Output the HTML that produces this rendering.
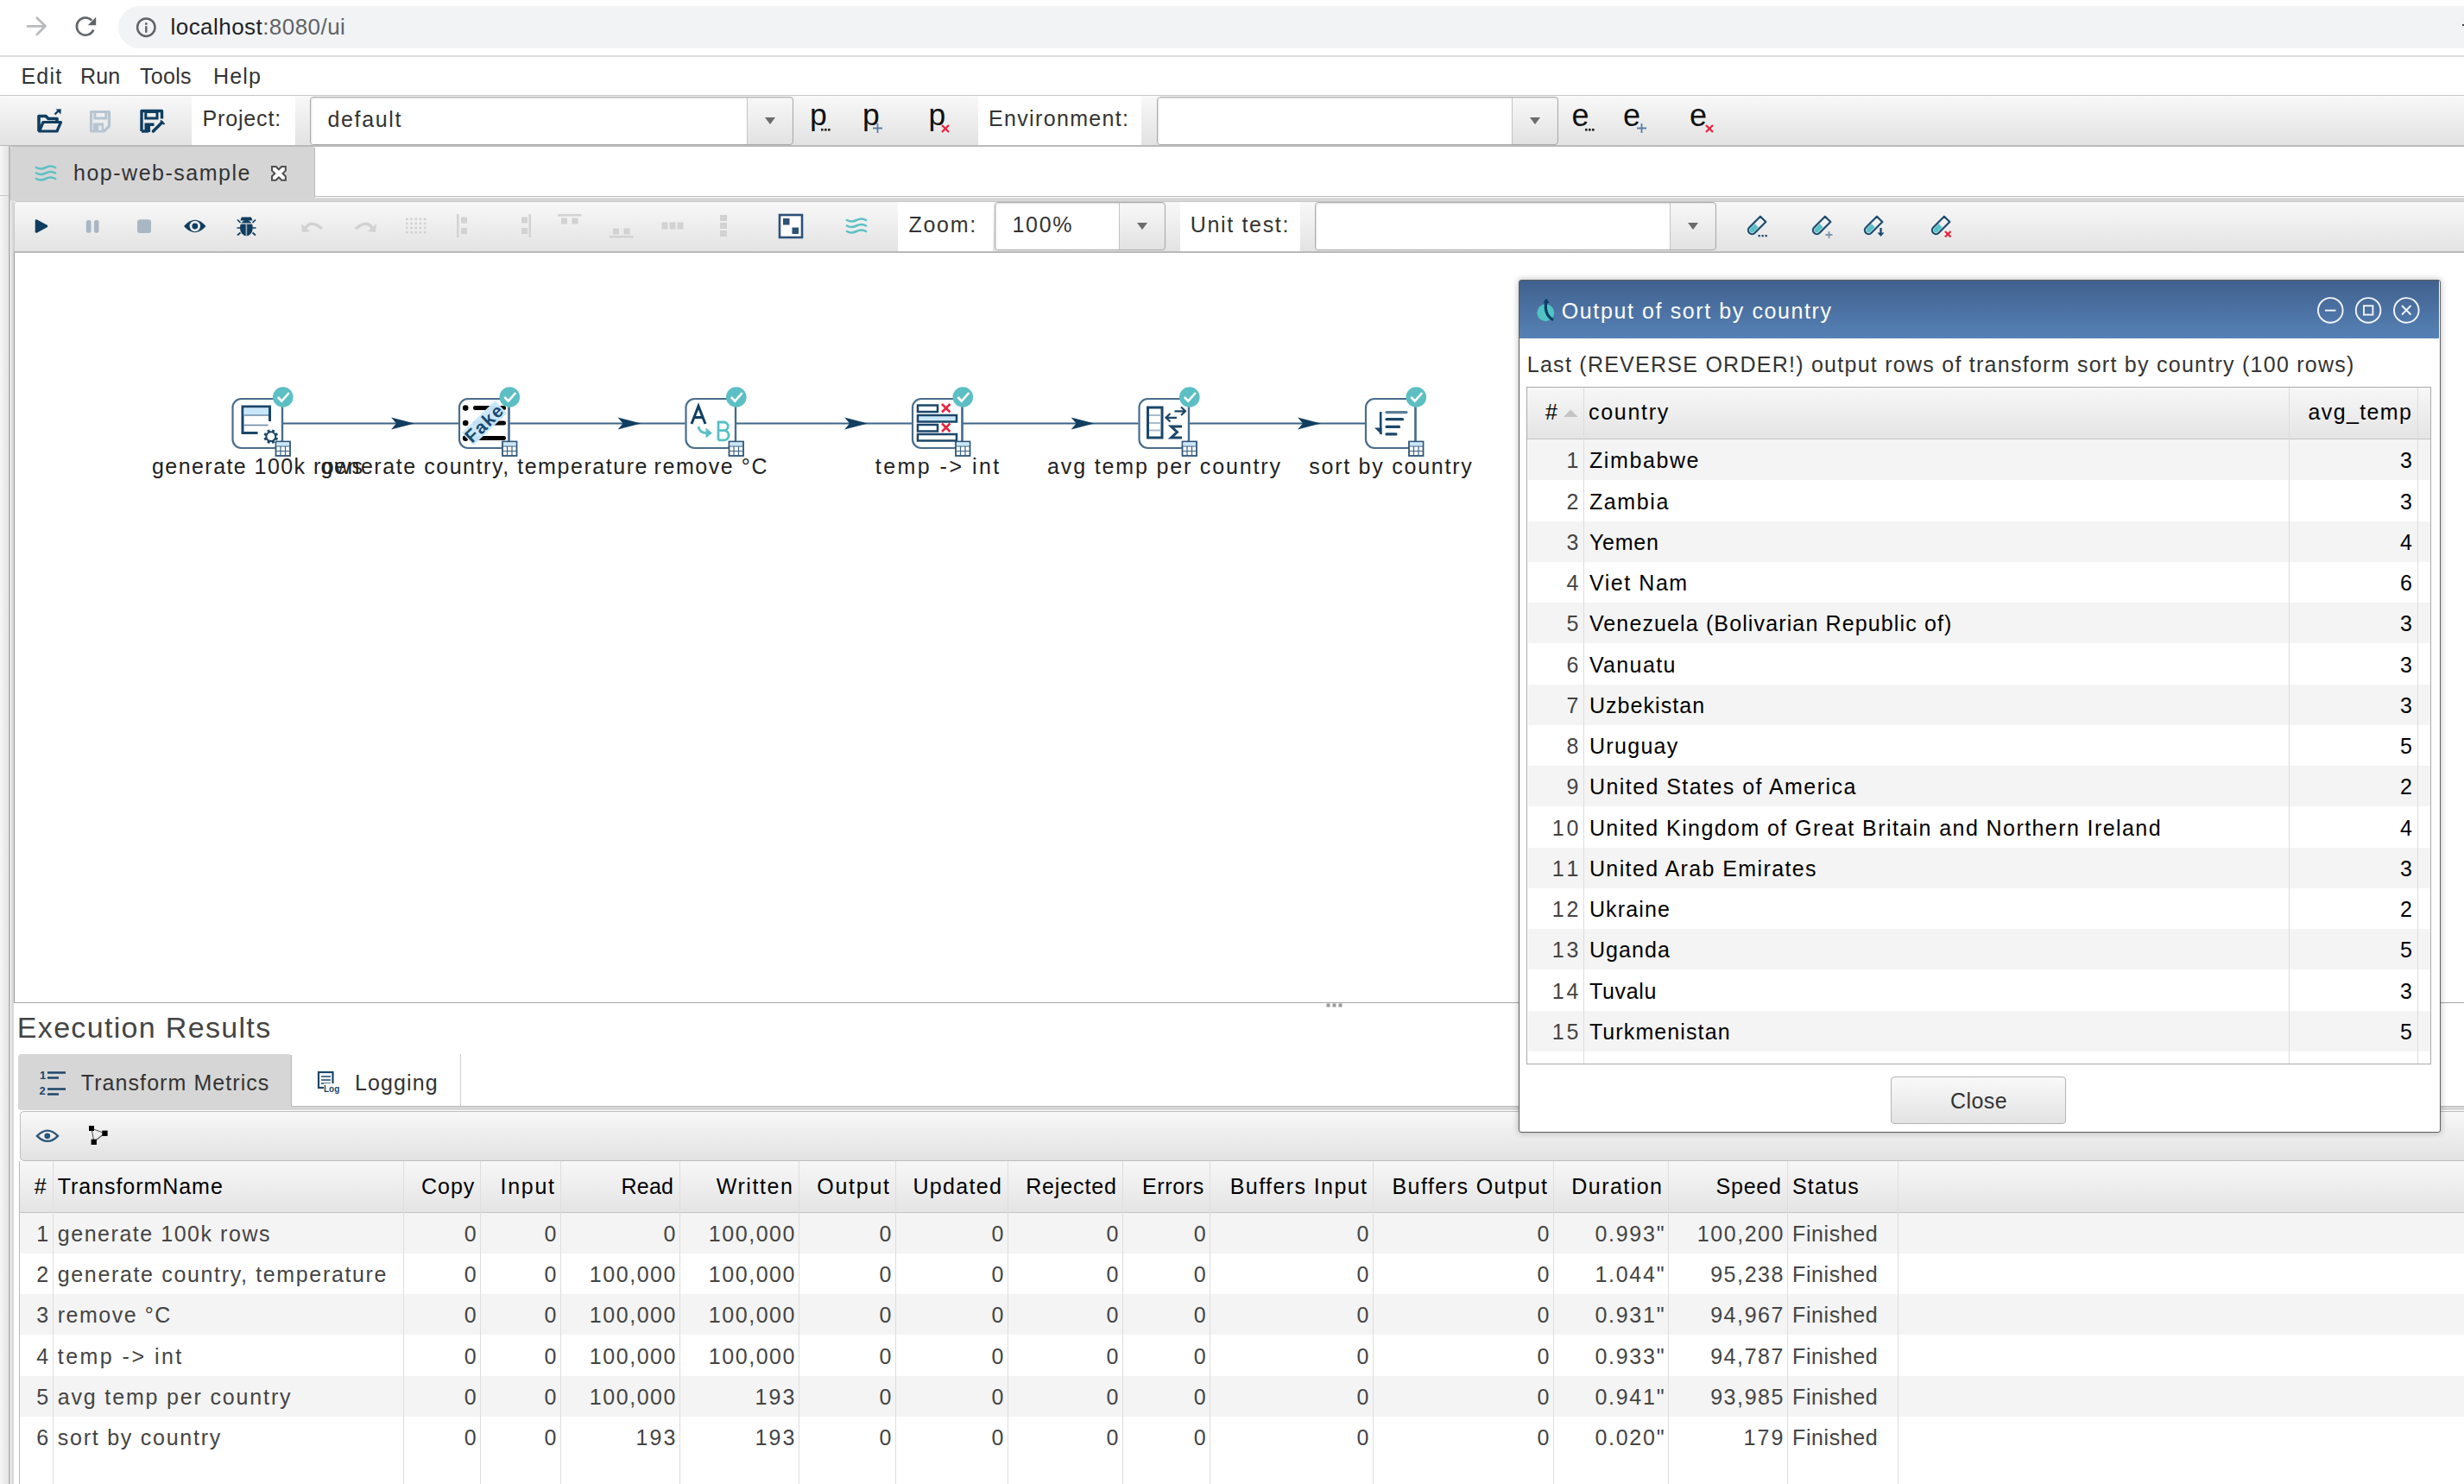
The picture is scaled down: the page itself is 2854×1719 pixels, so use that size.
<!DOCTYPE html><html><head><meta charset="utf-8"><style>
*{margin:0;padding:0;box-sizing:border-box}
html,body{width:2854px;height:1719px;overflow:hidden;background:#fff;font-family:"Liberation Sans",sans-serif}
.a{position:absolute}
.t{position:absolute;white-space:nowrap}
svg{position:absolute;overflow:visible}
</style></head><body><div class="a" style="left:0px;top:0px;width:2854px;height:65px;background:#fff"></div>
<div class="a" style="left:137px;top:7px;width:2760px;height:49px;background:#f1f3f4;border-radius:25px"></div>
<div class="a" style="left:0px;top:64px;width:2854px;height:2px;background:#dadce0"></div>
<div class="a" style="left:2851.5px;top:27.5px;width:3px;height:2.2px;background:#444"></div>
<svg style="left:0;top:0" width="190" height="64"><path d="M32 30.3 H52.5 M42.8 20.8 L52.5 30.3 L42.8 40" stroke="#b9babc" stroke-width="2.7" fill="none" stroke-linecap="round" stroke-linejoin="round"/><path d="M106.3 23.6 A10.1 10.1 0 1 0 108.3 34.4" stroke="#5f6368" stroke-width="2.6" fill="none"/><path d="M111.2 19.8 V29.3 H101.8 Z" fill="#5f6368"/><circle cx="169.3" cy="31.7" r="10.2" stroke="#5f6368" stroke-width="2.5" fill="none"/><rect x="168.1" y="30.2" width="2.4" height="7.6" fill="#5f6368"/><rect x="168.1" y="26.2" width="2.4" height="2.6" fill="#5f6368"/></svg>
<div class="t" style="top:15.99px;font-size:26px;letter-spacing:0.450px;line-height:30px;color:#202124;left:197.50px;">localhost<span style="color:#5f6368">:8080/ui</span></div>
<div class="t" style="top:73.84px;font-size:25px;letter-spacing:1.209px;line-height:29px;color:#333;left:24.40px;">Edit</div>
<div class="t" style="top:73.84px;font-size:25px;letter-spacing:0.196px;line-height:29px;color:#333;left:93.00px;">Run</div>
<div class="t" style="top:73.84px;font-size:25px;letter-spacing:0.276px;line-height:29px;color:#333;left:162.00px;">Tools</div>
<div class="t" style="top:73.84px;font-size:25px;letter-spacing:1.182px;line-height:29px;color:#333;left:247.00px;">Help</div>
<div class="a" style="left:0px;top:110px;width:2854px;height:1px;background:#c6c6c6"></div>
<div class="a" style="left:0px;top:111px;width:2854px;height:58px;background:linear-gradient(#f8f8f8,#e2e2e2)"></div>
<div class="a" style="left:0px;top:168px;width:2854px;height:1.5px;background:#b9b9b9"></div>
<svg style="left:0;top:110" width="200" height="60"><path d="M45 42 V24.5 H53 L56 27.5 H66 V30.5" fill="none" stroke="#0f3d5f" stroke-width="3.6" stroke-linejoin="round"/><path d="M45.5 42 L50 31.5 H70.5 L66 42 Z" fill="none" stroke="#0f3d5f" stroke-width="3.2" stroke-linejoin="round"/><path d="M63.5 22.5 L68 18" stroke="#0f3d5f" stroke-width="2.4"/><path d="M70.8 16.2 L64.6 16.6 L70.4 22.4 Z" fill="#0f3d5f"/><path d="M105.5 19.5 H126.5 V36 L120.5 42 H105.5 Z" fill="none" stroke="#b7c5d1" stroke-width="3.2" stroke-linejoin="round"/><rect x="109.8" y="19.5" width="13" height="7.5" fill="none" stroke="#b7c5d1" stroke-width="3"/><path d="M108 32.5 H120 V41 H108 Z" fill="#b7c5d1"/><rect x="114.3" y="35.5" width="3.3" height="5.5" fill="#e9e9e9"/><path d="M164 42 V18.5 H187.5 V27.5" fill="none" stroke="#0f3d5f" stroke-width="3.4" stroke-linejoin="round"/><path d="M164 42 H172" stroke="#0f3d5f" stroke-width="3.4"/><rect x="168.8" y="19.5" width="13.2" height="7.5" fill="none" stroke="#0f3d5f" stroke-width="3"/><path d="M167.5 32.5 H178.5 V36 H174 V43 H167.5 Z" fill="#0f3d5f"/><path d="M177.5 42 L187.5 32" stroke="#0f3d5f" stroke-width="3.6" stroke-linecap="round"/><path d="M186 29.5 L190.5 34" stroke="#0f3d5f" stroke-width="2"/></svg>
<div class="a" style="left:222px;top:111px;width:120px;height:57px;background:#fff"></div>
<div class="t" style="top:123.14px;font-size:25px;letter-spacing:0.836px;line-height:29px;color:#333;left:234.50px;">Project:</div>
<div class="a" style="left:359px;top:112px;width:560px;height:56px;background:linear-gradient(#f8f8f8,#e2e2e2);border:1px solid #a9a9a9;border-radius:4px;box-shadow:inset 0 1px 2px rgba(0,0,0,.08)"></div>
<div class="a" style="left:360px;top:113px;width:505px;height:54px;background:#fff;border-radius:3px 0 0 3px;box-shadow:inset 1px 1px 2px rgba(0,0,0,.12)"></div>
<div class="a" style="left:865px;top:113px;width:1px;height:54px;background:#c4c4c4"></div>
<svg style="left:886.0px;top:136.0px" width="12" height="9"><path d="M0 0 H12 L6 8 Z" fill="#6b6b6b"/></svg>
<div class="t" style="top:124.34px;font-size:25px;letter-spacing:1.632px;line-height:29px;color:#333;left:379.50px;">default</div>
<div class="t" style="top:113.00px;font-size:35.5px;letter-spacing:0.000px;line-height:41px;color:#111;left:938.00px;">p</div>
<div class="t" style="top:113.00px;font-size:35.5px;letter-spacing:0.000px;line-height:41px;color:#111;left:999.00px;">p</div>
<div class="t" style="top:113.00px;font-size:35.5px;letter-spacing:0.000px;line-height:41px;color:#111;left:1075.50px;">p</div>
<div class="a" style="left:1133px;top:111px;width:189px;height:57px;background:#fff"></div>
<div class="t" style="top:123.14px;font-size:25px;letter-spacing:1.342px;line-height:29px;color:#333;left:1145.00px;">Environment:</div>
<div class="a" style="left:1339.5px;top:112px;width:465.0px;height:56px;background:linear-gradient(#f8f8f8,#e2e2e2);border:1px solid #a9a9a9;border-radius:4px;box-shadow:inset 0 1px 2px rgba(0,0,0,.08)"></div>
<div class="a" style="left:1340.5px;top:113px;width:410.5px;height:54px;background:#fff;border-radius:3px 0 0 3px;box-shadow:inset 1px 1px 2px rgba(0,0,0,.12)"></div>
<div class="a" style="left:1751px;top:113px;width:1px;height:54px;background:#c4c4c4"></div>
<svg style="left:1771.75px;top:136.0px" width="12" height="9"><path d="M0 0 H12 L6 8 Z" fill="#6b6b6b"/></svg>
<div class="t" style="top:113.33px;font-size:36px;letter-spacing:0.000px;line-height:41px;color:#111;left:1820.50px;">e</div>
<div class="t" style="top:113.33px;font-size:36px;letter-spacing:0.000px;line-height:41px;color:#111;left:1880.00px;">e</div>
<div class="t" style="top:113.33px;font-size:36px;letter-spacing:0.000px;line-height:41px;color:#111;left:1957.00px;">e</div>
<svg style="left:951px;top:148.5px" width="12" height="4"><rect x="0" y="0" width="2.6" height="2.6" fill="#222"/><rect x="4" y="0" width="2.6" height="2.6" fill="#222"/><rect x="8" y="0" width="2.6" height="2.6" fill="#222"/></svg>
<svg style="left:1011px;top:142.5px" width="12" height="12"><path d="M0 5.5 H11 M5.5 0 V11" stroke="#5a7fa3" stroke-width="1.8"/></svg>
<svg style="left:1089.5px;top:143.5px" width="12" height="12"><path d="M1 1 L9 9 M9 1 L1 9" stroke="#e8253f" stroke-width="2.4"/></svg>
<svg style="left:1836px;top:148.5px" width="12" height="4"><rect x="0" y="0" width="2.6" height="2.6" fill="#222"/><rect x="4" y="0" width="2.6" height="2.6" fill="#222"/><rect x="8" y="0" width="2.6" height="2.6" fill="#222"/></svg>
<svg style="left:1896px;top:142.5px" width="12" height="12"><path d="M0 5.5 H11 M5.5 0 V11" stroke="#5a7fa3" stroke-width="1.8"/></svg>
<svg style="left:1974.5px;top:143.5px" width="12" height="12"><path d="M1 1 L9 9 M9 1 L1 9" stroke="#e8253f" stroke-width="2.4"/></svg>
<div class="a" style="left:0px;top:169px;width:10px;height:1550px;background:linear-gradient(90deg,#f6f6f6,#e3e3e3)"></div>
<div class="a" style="left:0px;top:226px;width:10px;height:1px;background:#c8c8c8"></div>
<div class="a" style="left:10px;top:169px;width:2px;height:1550px;background:#b9b9b9"></div>
<div class="a" style="left:12px;top:170px;width:352.5px;height:62px;background:#d5d5d5;border-radius:3px 3px 0 0"></div>
<div class="a" style="left:13px;top:229px;width:2841px;height:3.5px;background:#d6d6d6"></div>
<div class="a" style="left:364px;top:226.8px;width:2490px;height:1px;background:#b9b9b9"></div>
<div class="a" style="left:363.8px;top:171px;width:1.2px;height:57px;background:#b9b9b9"></div>
<svg style="left:41px;top:190px" width="26" height="22"><g fill="none" stroke="#5cc1c5" stroke-width="2.6" stroke-linecap="round"><path d="M1 4 q5 3 11 0 t11 0"/><path d="M1 10.5 q5 3 11 0 t11 0"/><path d="M1 17 q5 3 11 0 t11 0"/></g></svg>
<div class="t" style="top:185.64px;font-size:25px;letter-spacing:1.513px;line-height:29px;color:#333;left:85.00px;">hop-web-sample</div>
<svg style="left:314px;top:192px" width="18" height="18"><polygon points="1.00,1.00 5.60,1.00 8.90,4.30 12.20,1.00 16.80,1.00 16.80,5.60 13.50,8.90 16.80,12.20 16.80,16.80 12.20,16.80 8.90,13.50 5.60,16.80 1.00,16.80 1.00,12.20 4.30,8.90 1.00,5.60" fill="#fff" stroke="#4d4d4d" stroke-width="2" stroke-linejoin="miter"/></svg>
<div class="a" style="left:16px;top:232.5px;width:2838px;height:60px;background:linear-gradient(#f8f8f8,#e2e2e2);border-top:1px solid #c9c9c9;border-left:1px solid #c9c9c9;border-radius:4px 0 0 0"></div>
<div class="a" style="left:16px;top:291px;width:2838px;height:1.5px;background:#b9b9b9"></div>
<svg style="left:0;top:232" width="1020" height="60"><path d="M42 23.5 L54 30 L42 36.5 Z" fill="#0f3d5f" stroke="#0f3d5f" stroke-width="2.6" stroke-linejoin="round"/><rect x="99.8" y="23" width="5.8" height="14.7" rx="2.2" fill="#a9b7c3"/><rect x="108.9" y="23" width="5.6" height="14.7" rx="2.2" fill="#a9b7c3"/><rect x="159" y="22.3" width="16" height="15.6" rx="3" fill="#a9b7c3"/><path d="M213 30 Q225.75 15.5 238.5 30 Q225.75 44.5 213 30 Z" fill="#0f3d5f"/><circle cx="225.8" cy="30" r="6.2" fill="#ececec"/><circle cx="225.8" cy="30" r="3.4" fill="#0f3d5f"/><path d="M279.8 19.5 H291 L292.5 23.5 H278.3 Z" fill="#0f3d5f"/><ellipse cx="285.4" cy="32" rx="7.4" ry="9.3" fill="#0f3d5f"/><path d="M278 27 h15" stroke="#e8e8e8" stroke-width="1.2"/><path d="M285.4 27 V41" stroke="#9fb0bf" stroke-width="1.6"/><path d="M275 22.5 l3.5 3.5 M296 22.5 l-3.5 3.5 M274.5 32 h4 M296.5 32 h-4 M275 40.5 l3.5 -3 M296 40.5 l-3.5 -3" stroke="#0f3d5f" stroke-width="1.7"/><path d="M352 36 Q358 20 373 33" fill="none" stroke="#d2d2d2" stroke-width="3.5"/><path d="M349 27 L350 37 L359 36 Z" fill="#d2d2d2"/><path d="M433 36 Q427 20 412 33" fill="none" stroke="#d2d2d2" stroke-width="3.5"/><path d="M436 27 L435 37 L426 36 Z" fill="#d2d2d2"/></svg>
<svg style="left:0;top:0" width="1" height="1"><rect x="470.0" y="252.5" width="2.6" height="2.6" fill="#d2d2d2"/><rect x="470.0" y="257.6" width="2.6" height="2.6" fill="#d2d2d2"/><rect x="470.0" y="262.7" width="2.6" height="2.6" fill="#d2d2d2"/><rect x="470.0" y="267.8" width="2.6" height="2.6" fill="#d2d2d2"/><rect x="475.2" y="252.5" width="2.6" height="2.6" fill="#d2d2d2"/><rect x="475.2" y="257.6" width="2.6" height="2.6" fill="#d2d2d2"/><rect x="475.2" y="262.7" width="2.6" height="2.6" fill="#d2d2d2"/><rect x="475.2" y="267.8" width="2.6" height="2.6" fill="#d2d2d2"/><rect x="480.4" y="252.5" width="2.6" height="2.6" fill="#d2d2d2"/><rect x="480.4" y="257.6" width="2.6" height="2.6" fill="#d2d2d2"/><rect x="480.4" y="262.7" width="2.6" height="2.6" fill="#d2d2d2"/><rect x="480.4" y="267.8" width="2.6" height="2.6" fill="#d2d2d2"/><rect x="485.6" y="252.5" width="2.6" height="2.6" fill="#d2d2d2"/><rect x="485.6" y="257.6" width="2.6" height="2.6" fill="#d2d2d2"/><rect x="485.6" y="262.7" width="2.6" height="2.6" fill="#d2d2d2"/><rect x="485.6" y="267.8" width="2.6" height="2.6" fill="#d2d2d2"/><rect x="490.8" y="252.5" width="2.6" height="2.6" fill="#d2d2d2"/><rect x="490.8" y="257.6" width="2.6" height="2.6" fill="#d2d2d2"/><rect x="490.8" y="262.7" width="2.6" height="2.6" fill="#d2d2d2"/><rect x="490.8" y="267.8" width="2.6" height="2.6" fill="#d2d2d2"/><rect x="529" y="248" width="2.5" height="27" fill="#d2d2d2"/><rect x="534" y="251.5" width="7" height="7" fill="#d2d2d2"/><rect x="534" y="264" width="7" height="7" fill="#d2d2d2"/><rect x="612.5" y="248" width="2.5" height="27" fill="#d2d2d2"/><rect x="604" y="251.5" width="7" height="7" fill="#d2d2d2"/><rect x="604" y="264" width="7" height="7" fill="#d2d2d2"/><rect x="646" y="248" width="27.5" height="2.5" fill="#d2d2d2"/><rect x="650" y="252.5" width="7" height="7" fill="#d2d2d2"/><rect x="662.5" y="252.5" width="7" height="7" fill="#d2d2d2"/><rect x="706" y="273" width="27.5" height="2.5" fill="#d2d2d2"/><rect x="710" y="264.5" width="7" height="7" fill="#d2d2d2"/><rect x="722.5" y="264.5" width="7" height="7" fill="#d2d2d2"/><rect x="766.5" y="257.5" width="7" height="8" fill="#d2d2d2"/><rect x="775.5" y="257.5" width="7" height="8" fill="#d2d2d2"/><rect x="784.5" y="257.5" width="7" height="8" fill="#d2d2d2"/><rect x="834" y="249" width="8" height="7" fill="#d2d2d2"/><rect x="834" y="258" width="8" height="7" fill="#d2d2d2"/><rect x="834" y="267" width="8" height="7" fill="#d2d2d2"/><rect x="903" y="249" width="26" height="26" fill="#fff" stroke="#2c5277" stroke-width="2.6"/><rect x="907" y="253" width="7.5" height="7.5" fill="#2c5277"/><rect x="917.5" y="263.5" width="7.5" height="7.5" fill="#2c5277"/></svg>
<svg style="left:980px;top:251px" width="26" height="22"><g fill="none" stroke="#5cc1c5" stroke-width="2.6" stroke-linecap="round"><path d="M1 4 q5 3 11 0 t11 0"/><path d="M1 10.5 q5 3 11 0 t11 0"/><path d="M1 17 q5 3 11 0 t11 0"/></g></svg>
<div class="a" style="left:1040px;top:234px;width:110px;height:57px;background:#fff"></div>
<div class="t" style="top:246.34px;font-size:25px;letter-spacing:1.696px;line-height:29px;color:#333;left:1052.50px;">Zoom:</div>
<div class="a" style="left:1152px;top:234px;width:198px;height:56px;background:linear-gradient(#f8f8f8,#e2e2e2);border:1px solid #a9a9a9;border-radius:4px;box-shadow:inset 0 1px 2px rgba(0,0,0,.08)"></div>
<div class="a" style="left:1153px;top:235px;width:143px;height:54px;background:#fff;border-radius:3px 0 0 3px;box-shadow:inset 1px 1px 2px rgba(0,0,0,.12)"></div>
<div class="a" style="left:1296px;top:235px;width:1px;height:54px;background:#c4c4c4"></div>
<svg style="left:1317.0px;top:258.0px" width="12" height="9"><path d="M0 0 H12 L6 8 Z" fill="#6b6b6b"/></svg>
<div class="t" style="top:246.34px;font-size:25px;letter-spacing:1.660px;line-height:29px;color:#333;left:1172.50px;">100%</div>
<div class="a" style="left:1367px;top:234px;width:139px;height:57px;background:#fff"></div>
<div class="t" style="top:246.34px;font-size:25px;letter-spacing:1.656px;line-height:29px;color:#333;left:1378.80px;">Unit test:</div>
<div class="a" style="left:1523px;top:234px;width:465px;height:56px;background:linear-gradient(#f8f8f8,#e2e2e2);border:1px solid #a9a9a9;border-radius:4px;box-shadow:inset 0 1px 2px rgba(0,0,0,.08)"></div>
<div class="a" style="left:1524px;top:235px;width:410px;height:54px;background:#fff;border-radius:3px 0 0 3px;box-shadow:inset 1px 1px 2px rgba(0,0,0,.12)"></div>
<div class="a" style="left:1934px;top:235px;width:1px;height:54px;background:#c4c4c4"></div>
<svg style="left:1955.0px;top:258.0px" width="12" height="9"><path d="M0 0 H12 L6 8 Z" fill="#6b6b6b"/></svg>
<svg style="left:2022px;top:249px" width="30" height="28"><g transform="rotate(45 12 13)"><path d="M7.5 1.5 H16.5 V19.5 a4.5 4.5 0 0 1 -9 0 Z" fill="none" stroke="#1c4a6e" stroke-width="2.2" stroke-linejoin="round"/><path d="M9.2 12 h5.6 v7.5 a2.8 2.8 0 0 1 -5.6 0 z" fill="#58c1c6"/></g><rect x="14.5" y="23" width="2.3" height="2.3" fill="#1c4a6e"/><rect x="18.5" y="23" width="2.3" height="2.3" fill="#1c4a6e"/><rect x="22.5" y="23" width="2.3" height="2.3" fill="#1c4a6e"/></svg>
<svg style="left:2097px;top:249px" width="30" height="28"><g transform="rotate(45 12 13)"><path d="M7.5 1.5 H16.5 V19.5 a4.5 4.5 0 0 1 -9 0 Z" fill="none" stroke="#1c4a6e" stroke-width="2.2" stroke-linejoin="round"/><path d="M9.2 12 h5.6 v7.5 a2.8 2.8 0 0 1 -5.6 0 z" fill="#58c1c6"/></g><path d="M17.5 23 h8 M21.5 19 v8" stroke="#7d97ad" stroke-width="1.8"/></svg>
<svg style="left:2157px;top:249px" width="30" height="28"><g transform="rotate(45 12 13)"><path d="M7.5 1.5 H16.5 V19.5 a4.5 4.5 0 0 1 -9 0 Z" fill="none" stroke="#1c4a6e" stroke-width="2.2" stroke-linejoin="round"/><path d="M9.2 12 h5.6 v7.5 a2.8 2.8 0 0 1 -5.6 0 z" fill="#58c1c6"/></g><path d="M21.5 15 v6" stroke="#1c4a6e" stroke-width="2.4"/><path d="M17.5 20.5 h8 l-4 4.5 z" fill="#1c4a6e"/></svg>
<svg style="left:2235px;top:249px" width="30" height="28"><g transform="rotate(45 12 13)"><path d="M7.5 1.5 H16.5 V19.5 a4.5 4.5 0 0 1 -9 0 Z" fill="none" stroke="#1c4a6e" stroke-width="2.2" stroke-linejoin="round"/><path d="M9.2 12 h5.6 v7.5 a2.8 2.8 0 0 1 -5.6 0 z" fill="#58c1c6"/></g><path d="M18 19 l6.5 6.5 M24.5 19 l-6.5 6.5" stroke="#e8253f" stroke-width="2.4"/></svg>
<div class="a" style="left:13px;top:232px;width:2.6px;height:1487px;background:#d9d9d9"></div>
<div class="a" style="left:15.6px;top:292.5px;width:1.2px;height:869px;background:#9a9a9a"></div>
<div class="a" style="left:16px;top:1161px;width:2838px;height:1.2px;background:#a6a6a6"></div>
<svg style="left:1536px;top:1162px;z-index:5" width="20" height="6"><rect x="0.5" y="0.5" width="4" height="4" fill="#9a9a9a"/><rect x="7.5" y="0.5" width="4" height="4" fill="#9a9a9a"/><rect x="14.5" y="0.5" width="4" height="4" fill="#9a9a9a"/></svg>
<svg style="left:0;top:0" width="2854" height="1719"><path d="M327.5 490.5 H531.0" stroke="#3d6587" stroke-width="2.2"/><path d="M480.1 490.5 L453.1 483.5 L459.1 490.5 L453.1 497.5 Z" fill="#123e61"/><path d="M590.0 490.5 H793.5" stroke="#3d6587" stroke-width="2.2"/><path d="M742.6 490.5 L715.6 483.5 L721.6 490.5 L715.6 497.5 Z" fill="#123e61"/><path d="M852.5 490.5 H1056.0" stroke="#3d6587" stroke-width="2.2"/><path d="M1005.1 490.5 L978.1 483.5 L984.1 490.5 L978.1 497.5 Z" fill="#123e61"/><path d="M1115.0 490.5 H1318.5" stroke="#3d6587" stroke-width="2.2"/><path d="M1267.6 490.5 L1240.6 483.5 L1246.6 490.5 L1240.6 497.5 Z" fill="#123e61"/><path d="M1377.5 490.5 H1581.0" stroke="#3d6587" stroke-width="2.2"/><path d="M1530.1 490.5 L1503.1 483.5 L1509.1 490.5 L1503.1 497.5 Z" fill="#123e61"/><rect x="269.5" y="462" width="57.5" height="57" rx="10" fill="#fff" stroke="#4a6d8c" stroke-width="2.2"/><path d="M327.0 472 V512" stroke="#4a6d8c" stroke-width="2.2"/><rect x="532.0" y="462" width="57.5" height="57" rx="10" fill="#fff" stroke="#4a6d8c" stroke-width="2.2"/><path d="M589.5 472 V512" stroke="#4a6d8c" stroke-width="2.2"/><rect x="794.5" y="462" width="57.5" height="57" rx="10" fill="#fff" stroke="#4a6d8c" stroke-width="2.2"/><path d="M852.0 472 V512" stroke="#4a6d8c" stroke-width="2.2"/><rect x="1057.0" y="462" width="57.5" height="57" rx="10" fill="#fff" stroke="#4a6d8c" stroke-width="2.2"/><path d="M1114.5 472 V512" stroke="#4a6d8c" stroke-width="2.2"/><rect x="1319.5" y="462" width="57.5" height="57" rx="10" fill="#fff" stroke="#4a6d8c" stroke-width="2.2"/><path d="M1377.0 472 V512" stroke="#4a6d8c" stroke-width="2.2"/><rect x="1582.0" y="462" width="57.5" height="57" rx="10" fill="#fff" stroke="#4a6d8c" stroke-width="2.2"/><path d="M1639.5 472 V512" stroke="#4a6d8c" stroke-width="2.2"/><path d="M312.5 488 V471 H281.0 V501.5 H298.5" fill="none" stroke="#1b4669" stroke-width="3"/><rect x="282.5" y="472.5" width="28.5" height="8" fill="#c9e7fb"/><path d="M282.5 481 H311.0" stroke="#8aa5bc" stroke-width="2"/><path d="M282.5 492.5 H310.5" stroke="#6d8ca6" stroke-width="1.6"/><circle cx="313.8" cy="505.7" r="5.4" fill="#fff" stroke="#1b4669" stroke-width="2"/><rect x="312.3" y="497.4" width="3" height="3.2" fill="#1b4669" transform="rotate(22.5 313.8 505.7)"/><rect x="312.3" y="497.4" width="3" height="3.2" fill="#1b4669" transform="rotate(67.5 313.8 505.7)"/><rect x="312.3" y="497.4" width="3" height="3.2" fill="#1b4669" transform="rotate(112.5 313.8 505.7)"/><rect x="312.3" y="497.4" width="3" height="3.2" fill="#1b4669" transform="rotate(157.5 313.8 505.7)"/><rect x="312.3" y="497.4" width="3" height="3.2" fill="#1b4669" transform="rotate(202.5 313.8 505.7)"/><rect x="312.3" y="497.4" width="3" height="3.2" fill="#1b4669" transform="rotate(247.5 313.8 505.7)"/><rect x="312.3" y="497.4" width="3" height="3.2" fill="#1b4669" transform="rotate(292.5 313.8 505.7)"/><rect x="312.3" y="497.4" width="3" height="3.2" fill="#1b4669" transform="rotate(337.5 313.8 505.7)"/><circle cx="539.2" cy="472.6" r="3.3" fill="#000"/><path d="M550.5 472.6 H583.5" stroke="#000" stroke-width="5" stroke-linecap="round"/><circle cx="539.2" cy="490" r="3.3" fill="#000"/><path d="M550.5 490 H583.5" stroke="#000" stroke-width="5" stroke-linecap="round"/><circle cx="539.2" cy="507.6" r="3.3" fill="#000"/><path d="M550.5 507.6 H583.5" stroke="#000" stroke-width="5" stroke-linecap="round"/><g transform="translate(561.0 490) rotate(-44)"><rect x="-27" y="-10" width="54" height="20" fill="#c9e7fb" opacity=".97"/><text x="0" y="7.5" text-anchor="middle" font-family="Liberation Sans" font-weight="bold" font-size="21" fill="#1a4a70" letter-spacing="1.5">Fake</text></g><path d="M801.0 491 L809.0 470.5 L817.0 491 M804.0 483.5 H814.0" fill="none" stroke="#123e61" stroke-width="3"/><path d="M832.0 510 V489 H838.5 a4.8 4.8 0 0 1 0 9.6 H832.0 M838.5 498.6 a5.6 5.6 0 0 1 0 11.2 H832.0" fill="none" stroke="#59c0c5" stroke-width="2.8"/><path d="M809.0 494 q1 8 11 7.5" fill="none" stroke="#59c0c5" stroke-width="2.8"/><path d="M817.5 495.5 L825.0 501.5 L817.5 507.5 Z" fill="#59c0c5"/><rect x="1063.0" y="469.5" width="23" height="7.5" fill="#fff" stroke="#1b4669" stroke-width="2.5"/><rect x="1063.0" y="481" width="45" height="7.5" fill="#c9e7fb" stroke="#1b4669" stroke-width="2.5"/><rect x="1063.0" y="492" width="23" height="7.5" fill="#fff" stroke="#1b4669" stroke-width="2.5"/><rect x="1063.0" y="503" width="45" height="7.5" fill="#fff" stroke="#1b4669" stroke-width="2.5"/><path d="M1091.0 468 l9.5 9.5 M1100.5 468 l-9.5 9.5 M1091.0 490.5 l9.5 9.5 M1100.5 490.5 l-9.5 9.5" stroke="#e8253f" stroke-width="2.6"/><rect x="1329.5" y="472" width="16.5" height="35" fill="#fff" stroke="#1b4669" stroke-width="3"/><path d="M1331.0 481 H1344.5 M1331.0 490 H1344.5 M1331.0 498.5 H1344.5" stroke="#a9bccc" stroke-width="1.8"/><path d="M1360.5 476.3 H1373.0 M1368.0 471.5 L1373.0 476.3 L1368.0 481" fill="none" stroke="#1b4669" stroke-width="2.2"/><path d="M1363.0 483.8 H1350.5 M1355.5 479 L1350.5 483.8 L1355.5 488.5" fill="none" stroke="#1b4669" stroke-width="2.2"/><path d="M1369.0 494 H1356.5 L1363.5 500.5 L1356.5 507 H1369.0" fill="none" stroke="#1b4669" stroke-width="3"/><path d="M1599.2 477 V503" stroke="#1b4669" stroke-width="2.6"/><path d="M1592.0 495.5 L1600.5 503.8 V495.5 Z" fill="#1b4669"/><path d="M1606.0 477.6 H1629.0" stroke="#5d7e99" stroke-width="3.2" stroke-linecap="round"/><path d="M1606.0 485.7 H1624.5 M1606.0 494.4 H1620.5 M1606.0 502.9 H1617.0" stroke="#1b4669" stroke-width="3.2" stroke-linecap="round"/><circle cx="327.8" cy="460" r="11.8" fill="#5cbfc4"/><path d="M321.8 460 L326.3 464.5 L334.8 455" fill="none" stroke="#fff" stroke-width="2.6"/><rect x="319.5" y="511.5" width="16.5" height="16.5" fill="#fff" stroke="#2f5577" stroke-width="1.8"/><rect x="320.5" y="512.5" width="14.5" height="4" fill="#c9e7fb"/><path d="M319.5 517.0 H336.0 M319.5 522.5 H336.0 M325.0 517.0 V528.0 M330.5 517.0 V528.0" stroke="#3a6283" stroke-width="1.2"/><circle cx="590.3" cy="460" r="11.8" fill="#5cbfc4"/><path d="M584.3 460 L588.8 464.5 L597.3 455" fill="none" stroke="#fff" stroke-width="2.6"/><rect x="582.0" y="511.5" width="16.5" height="16.5" fill="#fff" stroke="#2f5577" stroke-width="1.8"/><rect x="583.0" y="512.5" width="14.5" height="4" fill="#c9e7fb"/><path d="M582.0 517.0 H598.5 M582.0 522.5 H598.5 M587.5 517.0 V528.0 M593.0 517.0 V528.0" stroke="#3a6283" stroke-width="1.2"/><circle cx="852.8" cy="460" r="11.8" fill="#5cbfc4"/><path d="M846.8 460 L851.3 464.5 L859.8 455" fill="none" stroke="#fff" stroke-width="2.6"/><rect x="844.5" y="511.5" width="16.5" height="16.5" fill="#fff" stroke="#2f5577" stroke-width="1.8"/><rect x="845.5" y="512.5" width="14.5" height="4" fill="#c9e7fb"/><path d="M844.5 517.0 H861.0 M844.5 522.5 H861.0 M850.0 517.0 V528.0 M855.5 517.0 V528.0" stroke="#3a6283" stroke-width="1.2"/><circle cx="1115.3" cy="460" r="11.8" fill="#5cbfc4"/><path d="M1109.3 460 L1113.8 464.5 L1122.3 455" fill="none" stroke="#fff" stroke-width="2.6"/><rect x="1107.0" y="511.5" width="16.5" height="16.5" fill="#fff" stroke="#2f5577" stroke-width="1.8"/><rect x="1108.0" y="512.5" width="14.5" height="4" fill="#c9e7fb"/><path d="M1107.0 517.0 H1123.5 M1107.0 522.5 H1123.5 M1112.5 517.0 V528.0 M1118.0 517.0 V528.0" stroke="#3a6283" stroke-width="1.2"/><circle cx="1377.8" cy="460" r="11.8" fill="#5cbfc4"/><path d="M1371.8 460 L1376.3 464.5 L1384.8 455" fill="none" stroke="#fff" stroke-width="2.6"/><rect x="1369.5" y="511.5" width="16.5" height="16.5" fill="#fff" stroke="#2f5577" stroke-width="1.8"/><rect x="1370.5" y="512.5" width="14.5" height="4" fill="#c9e7fb"/><path d="M1369.5 517.0 H1386.0 M1369.5 522.5 H1386.0 M1375.0 517.0 V528.0 M1380.5 517.0 V528.0" stroke="#3a6283" stroke-width="1.2"/><circle cx="1640.3" cy="460" r="11.8" fill="#5cbfc4"/><path d="M1634.3 460 L1638.8 464.5 L1647.3 455" fill="none" stroke="#fff" stroke-width="2.6"/><rect x="1632.0" y="511.5" width="16.5" height="16.5" fill="#fff" stroke="#2f5577" stroke-width="1.8"/><rect x="1633.0" y="512.5" width="14.5" height="4" fill="#c9e7fb"/><path d="M1632.0 517.0 H1648.5 M1632.0 522.5 H1648.5 M1637.5 517.0 V528.0 M1643.0 517.0 V528.0" stroke="#3a6283" stroke-width="1.2"/></svg>
<div class="t" style="top:525.84px;font-size:25px;letter-spacing:1.437px;line-height:29px;color:#222;left:176.00px;">generate 100k rows</div>
<div class="t" style="top:525.84px;font-size:25px;letter-spacing:1.555px;line-height:29px;color:#222;left:371.50px;">generate country, temperature</div>
<div class="t" style="top:525.84px;font-size:25px;letter-spacing:1.581px;line-height:29px;color:#222;left:757.50px;">remove °C</div>
<div class="t" style="top:525.84px;font-size:25px;letter-spacing:2.469px;line-height:29px;color:#222;left:1013.76px;">temp -&gt; int</div>
<div class="t" style="top:525.84px;font-size:25px;letter-spacing:1.840px;line-height:29px;color:#222;left:1213.09px;">avg temp per country</div>
<div class="t" style="top:525.84px;font-size:25px;letter-spacing:1.757px;line-height:29px;color:#222;left:1516.22px;">sort by country</div>
<div class="a" style="left:16px;top:1162.5px;width:2838px;height:557px;background:#fff"></div>
<div class="t" style="top:1171.42px;font-size:34px;letter-spacing:1.326px;line-height:39px;color:#444;left:19.80px;">Execution Results</div>
<div class="a" style="left:20.5px;top:1221px;width:317px;height:64px;background:#d6d6d6;border-radius:4px 4px 0 0"></div>
<div class="a" style="left:533px;top:1221px;width:1px;height:60px;background:#d0d0d0"></div>
<div class="a" style="left:23px;top:1282.2px;width:2831px;height:4px;background:#d6d6d6"></div>
<div class="a" style="left:337px;top:1280.5px;width:2517px;height:1px;background:#b9b9b9"></div>
<div class="a" style="left:337px;top:1222px;width:1.2px;height:59px;background:#b9b9b9"></div>
<svg style="left:0;top:1221" width="400" height="60"><text x="46" y="29" font-family="Liberation Sans" font-weight="bold" font-size="13" fill="#1b4669">1</text><text x="45.5" y="46.5" font-family="Liberation Sans" font-weight="bold" font-size="13" fill="#1b4669">2</text><path d="M55 21.5 H76 M55 27.5 H68 M55 40.5 H76 M55 46.5 H68" stroke="#1b4669" stroke-width="2.6"/><rect x="369" y="21" width="16.5" height="18" fill="#fff" stroke="#1b4669" stroke-width="2.2"/><path d="M372 26 H383 M372 30 H383 M372 34 H383" stroke="#1b4669" stroke-width="1.5"/><rect x="375" y="34" width="17" height="10" fill="#fff"/><text x="375" y="44" font-family="Liberation Sans" font-weight="bold" font-size="10" fill="#1b4669">Log</text></svg>
<div class="t" style="top:1239.84px;font-size:25px;letter-spacing:1.068px;line-height:29px;color:#333;left:93.80px;">Transform Metrics</div>
<div class="t" style="top:1239.84px;font-size:25px;letter-spacing:1.112px;line-height:29px;color:#333;left:411.00px;">Logging</div>
<div class="a" style="left:23px;top:1286.5px;width:2831px;height:58px;background:linear-gradient(#f8f8f8,#e2e2e2);border:1px solid #bdbdbd;border-right:0;border-radius:5px 0 0 5px"></div>
<svg style="left:0;top:1286" width="140" height="60"><path d="M43 29.8 Q55 17.5 67 29.8 Q55 42 43 29.8 Z" fill="none" stroke="#2b5577" stroke-width="2.4"/><circle cx="54.8" cy="29.8" r="3.4" fill="#2b5577"/><path d="M106 21 L108.8 36.5 L121.3 26.8 Z" fill="none" stroke="#555" stroke-width="1.1"/><rect x="103" y="18" width="6" height="6" fill="#000"/><rect x="118.3" y="23.6" width="6.3" height="6.3" fill="#000"/><rect x="105.6" y="33.7" width="6.3" height="6.3" fill="#000"/></svg>
<div class="a" style="left:22px;top:1344.5px;width:2832px;height:374.5px;background:#fff;border-left:1px solid #b9b9b9"></div>
<div class="a" style="left:23px;top:1344.5px;width:2831px;height:60px;background:linear-gradient(#f7f7f7,#e4e4e4)"></div>
<div class="a" style="left:23px;top:1404px;width:2831px;height:1px;background:#c4c4c4"></div>
<div class="a" style="left:23px;top:1404.5px;width:2831px;height:47.25px;background:#f4f4f4"></div>
<div class="a" style="left:23px;top:1499.0px;width:2831px;height:47.25px;background:#f4f4f4"></div>
<div class="a" style="left:23px;top:1593.5px;width:2831px;height:47.25px;background:#f4f4f4"></div>
<div class="a" style="left:60.75px;top:1344.5px;width:1px;height:374.5px;background:#dedede"></div>
<div class="a" style="left:467.0px;top:1344.5px;width:1px;height:374.5px;background:#dedede"></div>
<div class="a" style="left:556.25px;top:1344.5px;width:1px;height:374.5px;background:#dedede"></div>
<div class="a" style="left:649.0px;top:1344.5px;width:1px;height:374.5px;background:#dedede"></div>
<div class="a" style="left:787.0px;top:1344.5px;width:1px;height:374.5px;background:#dedede"></div>
<div class="a" style="left:925.0px;top:1344.5px;width:1px;height:374.5px;background:#dedede"></div>
<div class="a" style="left:1037.0px;top:1344.5px;width:1px;height:374.5px;background:#dedede"></div>
<div class="a" style="left:1167.0px;top:1344.5px;width:1px;height:374.5px;background:#dedede"></div>
<div class="a" style="left:1300.0px;top:1344.5px;width:1px;height:374.5px;background:#dedede"></div>
<div class="a" style="left:1401.25px;top:1344.5px;width:1px;height:374.5px;background:#dedede"></div>
<div class="a" style="left:1590.0px;top:1344.5px;width:1px;height:374.5px;background:#dedede"></div>
<div class="a" style="left:1799.0px;top:1344.5px;width:1px;height:374.5px;background:#dedede"></div>
<div class="a" style="left:1932.0px;top:1344.5px;width:1px;height:374.5px;background:#dedede"></div>
<div class="a" style="left:2070.0px;top:1344.5px;width:1px;height:374.5px;background:#dedede"></div>
<div class="a" style="left:2197.75px;top:1344.5px;width:1px;height:374.5px;background:#dedede"></div>
<div class="t" style="top:1360.14px;font-size:25px;letter-spacing:0.000px;line-height:29px;color:#000;right:2800.24px;text-align:right;">#</div>
<div class="t" style="top:1360.14px;font-size:25px;letter-spacing:0.954px;line-height:29px;color:#000;left:66.68px;">TransformName</div>
<div class="t" style="top:1360.14px;font-size:25px;letter-spacing:0.939px;line-height:29px;color:#000;right:2303.79px;text-align:right;">Copy</div>
<div class="t" style="top:1360.14px;font-size:25px;letter-spacing:1.705px;line-height:29px;color:#000;right:2210.30px;text-align:right;">Input</div>
<div class="t" style="top:1360.14px;font-size:25px;letter-spacing:0.271px;line-height:29px;color:#000;right:2073.73px;text-align:right;">Read</div>
<div class="t" style="top:1360.14px;font-size:25px;letter-spacing:1.610px;line-height:29px;color:#000;right:1934.39px;text-align:right;">Written</div>
<div class="t" style="top:1360.14px;font-size:25px;letter-spacing:1.742px;line-height:29px;color:#000;right:1822.25px;text-align:right;">Output</div>
<div class="t" style="top:1360.14px;font-size:25px;letter-spacing:1.348px;line-height:29px;color:#000;right:1692.67px;text-align:right;">Updated</div>
<div class="t" style="top:1360.14px;font-size:25px;letter-spacing:0.886px;line-height:29px;color:#000;right:1560.12px;text-align:right;">Rejected</div>
<div class="t" style="top:1360.14px;font-size:25px;letter-spacing:0.658px;line-height:29px;color:#000;right:1459.08px;text-align:right;">Errors</div>
<div class="t" style="top:1360.14px;font-size:25px;letter-spacing:1.409px;line-height:29px;color:#000;right:1269.60px;text-align:right;">Buffers Input</div>
<div class="t" style="top:1360.14px;font-size:25px;letter-spacing:1.445px;line-height:29px;color:#000;right:1060.55px;text-align:right;">Buffers Output</div>
<div class="t" style="top:1360.14px;font-size:25px;letter-spacing:1.459px;line-height:29px;color:#000;right:927.55px;text-align:right;">Duration</div>
<div class="t" style="top:1360.14px;font-size:25px;letter-spacing:0.821px;line-height:29px;color:#000;right:790.18px;text-align:right;">Speed</div>
<div class="t" style="top:1360.14px;font-size:25px;letter-spacing:1.193px;line-height:29px;color:#000;left:2076.00px;">Status</div>
<div class="t" style="top:1414.86px;font-size:25px;letter-spacing:0.000px;line-height:29px;color:#444;right:2797.75px;text-align:right;">1</div>
<div class="t" style="top:1414.86px;font-size:25px;letter-spacing:1.538px;line-height:29px;color:#444;left:66.75px;">generate 100k rows</div>
<div class="t" style="top:1414.86px;font-size:25px;letter-spacing:0.000px;line-height:29px;color:#444;right:2302.25px;text-align:right;">0</div>
<div class="t" style="top:1414.86px;font-size:25px;letter-spacing:0.000px;line-height:29px;color:#444;right:2209.50px;text-align:right;">0</div>
<div class="t" style="top:1414.86px;font-size:25px;letter-spacing:0.000px;line-height:29px;color:#444;right:2071.50px;text-align:right;">0</div>
<div class="t" style="top:1414.86px;font-size:25px;letter-spacing:1.553px;line-height:29px;color:#444;right:1931.96px;text-align:right;">100,000</div>
<div class="t" style="top:1414.86px;font-size:25px;letter-spacing:0.000px;line-height:29px;color:#444;right:1821.50px;text-align:right;">0</div>
<div class="t" style="top:1414.86px;font-size:25px;letter-spacing:0.000px;line-height:29px;color:#444;right:1691.50px;text-align:right;">0</div>
<div class="t" style="top:1414.86px;font-size:25px;letter-spacing:0.000px;line-height:29px;color:#444;right:1558.50px;text-align:right;">0</div>
<div class="t" style="top:1414.86px;font-size:25px;letter-spacing:0.000px;line-height:29px;color:#444;right:1457.25px;text-align:right;">0</div>
<div class="t" style="top:1414.86px;font-size:25px;letter-spacing:0.000px;line-height:29px;color:#444;right:1268.50px;text-align:right;">0</div>
<div class="t" style="top:1414.86px;font-size:25px;letter-spacing:0.000px;line-height:29px;color:#444;right:1059.50px;text-align:right;">0</div>
<div class="t" style="top:1414.86px;font-size:25px;letter-spacing:1.739px;line-height:29px;color:#444;right:924.75px;text-align:right;">0.993"</div>
<div class="t" style="top:1414.86px;font-size:25px;letter-spacing:1.553px;line-height:29px;color:#444;right:786.96px;text-align:right;">100,200</div>
<div class="t" style="top:1414.86px;font-size:25px;letter-spacing:0.611px;line-height:29px;color:#444;left:2076.00px;">Finished</div>
<div class="t" style="top:1462.11px;font-size:25px;letter-spacing:0.000px;line-height:29px;color:#444;right:2797.75px;text-align:right;">2</div>
<div class="t" style="top:1462.11px;font-size:25px;letter-spacing:1.653px;line-height:29px;color:#444;left:66.75px;">generate country, temperature</div>
<div class="t" style="top:1462.11px;font-size:25px;letter-spacing:0.000px;line-height:29px;color:#444;right:2302.25px;text-align:right;">0</div>
<div class="t" style="top:1462.11px;font-size:25px;letter-spacing:0.000px;line-height:29px;color:#444;right:2209.50px;text-align:right;">0</div>
<div class="t" style="top:1462.11px;font-size:25px;letter-spacing:1.553px;line-height:29px;color:#444;right:2069.96px;text-align:right;">100,000</div>
<div class="t" style="top:1462.11px;font-size:25px;letter-spacing:1.553px;line-height:29px;color:#444;right:1931.96px;text-align:right;">100,000</div>
<div class="t" style="top:1462.11px;font-size:25px;letter-spacing:0.000px;line-height:29px;color:#444;right:1821.50px;text-align:right;">0</div>
<div class="t" style="top:1462.11px;font-size:25px;letter-spacing:0.000px;line-height:29px;color:#444;right:1691.50px;text-align:right;">0</div>
<div class="t" style="top:1462.11px;font-size:25px;letter-spacing:0.000px;line-height:29px;color:#444;right:1558.50px;text-align:right;">0</div>
<div class="t" style="top:1462.11px;font-size:25px;letter-spacing:0.000px;line-height:29px;color:#444;right:1457.25px;text-align:right;">0</div>
<div class="t" style="top:1462.11px;font-size:25px;letter-spacing:0.000px;line-height:29px;color:#444;right:1268.50px;text-align:right;">0</div>
<div class="t" style="top:1462.11px;font-size:25px;letter-spacing:0.000px;line-height:29px;color:#444;right:1059.50px;text-align:right;">0</div>
<div class="t" style="top:1462.11px;font-size:25px;letter-spacing:1.739px;line-height:29px;color:#444;right:924.75px;text-align:right;">1.044"</div>
<div class="t" style="top:1462.11px;font-size:25px;letter-spacing:1.577px;line-height:29px;color:#444;right:786.93px;text-align:right;">95,238</div>
<div class="t" style="top:1462.11px;font-size:25px;letter-spacing:0.611px;line-height:29px;color:#444;left:2076.00px;">Finished</div>
<div class="t" style="top:1509.36px;font-size:25px;letter-spacing:0.000px;line-height:29px;color:#444;right:2797.75px;text-align:right;">3</div>
<div class="t" style="top:1509.36px;font-size:25px;letter-spacing:1.519px;line-height:29px;color:#444;left:66.75px;">remove °C</div>
<div class="t" style="top:1509.36px;font-size:25px;letter-spacing:0.000px;line-height:29px;color:#444;right:2302.25px;text-align:right;">0</div>
<div class="t" style="top:1509.36px;font-size:25px;letter-spacing:0.000px;line-height:29px;color:#444;right:2209.50px;text-align:right;">0</div>
<div class="t" style="top:1509.36px;font-size:25px;letter-spacing:1.553px;line-height:29px;color:#444;right:2069.96px;text-align:right;">100,000</div>
<div class="t" style="top:1509.36px;font-size:25px;letter-spacing:1.553px;line-height:29px;color:#444;right:1931.96px;text-align:right;">100,000</div>
<div class="t" style="top:1509.36px;font-size:25px;letter-spacing:0.000px;line-height:29px;color:#444;right:1821.50px;text-align:right;">0</div>
<div class="t" style="top:1509.36px;font-size:25px;letter-spacing:0.000px;line-height:29px;color:#444;right:1691.50px;text-align:right;">0</div>
<div class="t" style="top:1509.36px;font-size:25px;letter-spacing:0.000px;line-height:29px;color:#444;right:1558.50px;text-align:right;">0</div>
<div class="t" style="top:1509.36px;font-size:25px;letter-spacing:0.000px;line-height:29px;color:#444;right:1457.25px;text-align:right;">0</div>
<div class="t" style="top:1509.36px;font-size:25px;letter-spacing:0.000px;line-height:29px;color:#444;right:1268.50px;text-align:right;">0</div>
<div class="t" style="top:1509.36px;font-size:25px;letter-spacing:0.000px;line-height:29px;color:#444;right:1059.50px;text-align:right;">0</div>
<div class="t" style="top:1509.36px;font-size:25px;letter-spacing:1.739px;line-height:29px;color:#444;right:924.75px;text-align:right;">0.931"</div>
<div class="t" style="top:1509.36px;font-size:25px;letter-spacing:1.577px;line-height:29px;color:#444;right:786.93px;text-align:right;">94,967</div>
<div class="t" style="top:1509.36px;font-size:25px;letter-spacing:0.611px;line-height:29px;color:#444;left:2076.00px;">Finished</div>
<div class="t" style="top:1556.61px;font-size:25px;letter-spacing:0.000px;line-height:29px;color:#444;right:2797.75px;text-align:right;">4</div>
<div class="t" style="top:1556.61px;font-size:25px;letter-spacing:2.469px;line-height:29px;color:#444;left:66.75px;">temp -&gt; int</div>
<div class="t" style="top:1556.61px;font-size:25px;letter-spacing:0.000px;line-height:29px;color:#444;right:2302.25px;text-align:right;">0</div>
<div class="t" style="top:1556.61px;font-size:25px;letter-spacing:0.000px;line-height:29px;color:#444;right:2209.50px;text-align:right;">0</div>
<div class="t" style="top:1556.61px;font-size:25px;letter-spacing:1.553px;line-height:29px;color:#444;right:2069.96px;text-align:right;">100,000</div>
<div class="t" style="top:1556.61px;font-size:25px;letter-spacing:1.553px;line-height:29px;color:#444;right:1931.96px;text-align:right;">100,000</div>
<div class="t" style="top:1556.61px;font-size:25px;letter-spacing:0.000px;line-height:29px;color:#444;right:1821.50px;text-align:right;">0</div>
<div class="t" style="top:1556.61px;font-size:25px;letter-spacing:0.000px;line-height:29px;color:#444;right:1691.50px;text-align:right;">0</div>
<div class="t" style="top:1556.61px;font-size:25px;letter-spacing:0.000px;line-height:29px;color:#444;right:1558.50px;text-align:right;">0</div>
<div class="t" style="top:1556.61px;font-size:25px;letter-spacing:0.000px;line-height:29px;color:#444;right:1457.25px;text-align:right;">0</div>
<div class="t" style="top:1556.61px;font-size:25px;letter-spacing:0.000px;line-height:29px;color:#444;right:1268.50px;text-align:right;">0</div>
<div class="t" style="top:1556.61px;font-size:25px;letter-spacing:0.000px;line-height:29px;color:#444;right:1059.50px;text-align:right;">0</div>
<div class="t" style="top:1556.61px;font-size:25px;letter-spacing:1.739px;line-height:29px;color:#444;right:924.75px;text-align:right;">0.933"</div>
<div class="t" style="top:1556.61px;font-size:25px;letter-spacing:1.577px;line-height:29px;color:#444;right:786.93px;text-align:right;">94,787</div>
<div class="t" style="top:1556.61px;font-size:25px;letter-spacing:0.611px;line-height:29px;color:#444;left:2076.00px;">Finished</div>
<div class="t" style="top:1603.86px;font-size:25px;letter-spacing:0.000px;line-height:29px;color:#444;right:2797.75px;text-align:right;">5</div>
<div class="t" style="top:1603.86px;font-size:25px;letter-spacing:1.840px;line-height:29px;color:#444;left:66.75px;">avg temp per country</div>
<div class="t" style="top:1603.86px;font-size:25px;letter-spacing:0.000px;line-height:29px;color:#444;right:2302.25px;text-align:right;">0</div>
<div class="t" style="top:1603.86px;font-size:25px;letter-spacing:0.000px;line-height:29px;color:#444;right:2209.50px;text-align:right;">0</div>
<div class="t" style="top:1603.86px;font-size:25px;letter-spacing:1.553px;line-height:29px;color:#444;right:2069.96px;text-align:right;">100,000</div>
<div class="t" style="top:1603.86px;font-size:25px;letter-spacing:2.163px;line-height:29px;color:#444;right:1931.32px;text-align:right;">193</div>
<div class="t" style="top:1603.86px;font-size:25px;letter-spacing:0.000px;line-height:29px;color:#444;right:1821.50px;text-align:right;">0</div>
<div class="t" style="top:1603.86px;font-size:25px;letter-spacing:0.000px;line-height:29px;color:#444;right:1691.50px;text-align:right;">0</div>
<div class="t" style="top:1603.86px;font-size:25px;letter-spacing:0.000px;line-height:29px;color:#444;right:1558.50px;text-align:right;">0</div>
<div class="t" style="top:1603.86px;font-size:25px;letter-spacing:0.000px;line-height:29px;color:#444;right:1457.25px;text-align:right;">0</div>
<div class="t" style="top:1603.86px;font-size:25px;letter-spacing:0.000px;line-height:29px;color:#444;right:1268.50px;text-align:right;">0</div>
<div class="t" style="top:1603.86px;font-size:25px;letter-spacing:0.000px;line-height:29px;color:#444;right:1059.50px;text-align:right;">0</div>
<div class="t" style="top:1603.86px;font-size:25px;letter-spacing:1.739px;line-height:29px;color:#444;right:924.75px;text-align:right;">0.941"</div>
<div class="t" style="top:1603.86px;font-size:25px;letter-spacing:1.577px;line-height:29px;color:#444;right:786.93px;text-align:right;">93,985</div>
<div class="t" style="top:1603.86px;font-size:25px;letter-spacing:0.611px;line-height:29px;color:#444;left:2076.00px;">Finished</div>
<div class="t" style="top:1651.11px;font-size:25px;letter-spacing:0.000px;line-height:29px;color:#444;right:2797.75px;text-align:right;">6</div>
<div class="t" style="top:1651.11px;font-size:25px;letter-spacing:1.757px;line-height:29px;color:#444;left:66.75px;">sort by country</div>
<div class="t" style="top:1651.11px;font-size:25px;letter-spacing:0.000px;line-height:29px;color:#444;right:2302.25px;text-align:right;">0</div>
<div class="t" style="top:1651.11px;font-size:25px;letter-spacing:0.000px;line-height:29px;color:#444;right:2209.50px;text-align:right;">0</div>
<div class="t" style="top:1651.11px;font-size:25px;letter-spacing:2.163px;line-height:29px;color:#444;right:2069.32px;text-align:right;">193</div>
<div class="t" style="top:1651.11px;font-size:25px;letter-spacing:2.163px;line-height:29px;color:#444;right:1931.32px;text-align:right;">193</div>
<div class="t" style="top:1651.11px;font-size:25px;letter-spacing:0.000px;line-height:29px;color:#444;right:1821.50px;text-align:right;">0</div>
<div class="t" style="top:1651.11px;font-size:25px;letter-spacing:0.000px;line-height:29px;color:#444;right:1691.50px;text-align:right;">0</div>
<div class="t" style="top:1651.11px;font-size:25px;letter-spacing:0.000px;line-height:29px;color:#444;right:1558.50px;text-align:right;">0</div>
<div class="t" style="top:1651.11px;font-size:25px;letter-spacing:0.000px;line-height:29px;color:#444;right:1457.25px;text-align:right;">0</div>
<div class="t" style="top:1651.11px;font-size:25px;letter-spacing:0.000px;line-height:29px;color:#444;right:1268.50px;text-align:right;">0</div>
<div class="t" style="top:1651.11px;font-size:25px;letter-spacing:0.000px;line-height:29px;color:#444;right:1059.50px;text-align:right;">0</div>
<div class="t" style="top:1651.11px;font-size:25px;letter-spacing:1.739px;line-height:29px;color:#444;right:924.75px;text-align:right;">0.020"</div>
<div class="t" style="top:1651.11px;font-size:25px;letter-spacing:2.163px;line-height:29px;color:#444;right:786.32px;text-align:right;">179</div>
<div class="t" style="top:1651.11px;font-size:25px;letter-spacing:0.611px;line-height:29px;color:#444;left:2076.00px;">Finished</div>
<div class="a" style="left:1758.5px;top:323.5px;width:1068.0px;height:988.0px;background:#fff;border:1px solid #5e5e5e;border-radius:3px;box-shadow:0 0 7px 1px rgba(0,0,0,.22)"></div>
<div class="a" style="left:1759.5px;top:325px;width:1065.5px;height:66.5px;background:linear-gradient(#40618e,#5681b6)"></div>
<svg style="left:1778px;top:343px" width="26" height="32"><circle cx="12.3" cy="19.3" r="10" fill="#52c2c4"/><path d="M13 5 q-3 16 7 22" fill="none" stroke="#0b4066" stroke-width="3.2" stroke-linecap="round"/><path d="M9.5 8 l3.5 -5 l3.5 5 z" fill="#0b4066"/></svg>
<div class="t" style="top:345.64px;font-size:25px;letter-spacing:1.604px;line-height:29px;color:#fff;left:1808.80px;">Output of sort by country</div>
<svg style="left:2670px;top:340px" width="140" height="40"><g fill="none" stroke="#f2f5f9" stroke-width="1.9"><circle cx="29.3" cy="19.4" r="14.3"/><circle cx="73.1" cy="19.4" r="14.3"/><circle cx="117.3" cy="19.4" r="14.3"/><path d="M23 19.6 H35.5"/><rect x="68" y="14.2" width="10.4" height="10.4"/><path d="M112 14 L122.5 24.5 M122.5 14 L112 24.5"/></g></svg>
<div class="t" style="top:407.84px;font-size:25px;letter-spacing:1.259px;line-height:29px;color:#333;left:1768.80px;">Last (REVERSE ORDER!) output rows of transform sort by country (100 rows)</div>
<div class="a" style="left:1768px;top:448px;width:1048px;height:785px;background:#fff;border:1px solid #a9a9a9"></div>
<div class="a" style="left:1769px;top:449px;width:1046px;height:60px;background:linear-gradient(#f7f7f7,#e4e4e4)"></div>
<div class="a" style="left:1769px;top:508.25px;width:1046px;height:1px;background:#c4c4c4"></div>
<div class="a" style="left:1770px;top:509.0px;width:1045px;height:47.25px;background:#f4f4f4"></div>
<div class="a" style="left:1770px;top:603.5px;width:1045px;height:47.25px;background:#f4f4f4"></div>
<div class="a" style="left:1770px;top:698.0px;width:1045px;height:47.25px;background:#f4f4f4"></div>
<div class="a" style="left:1770px;top:792.5px;width:1045px;height:47.25px;background:#f4f4f4"></div>
<div class="a" style="left:1770px;top:887.0px;width:1045px;height:47.25px;background:#f4f4f4"></div>
<div class="a" style="left:1770px;top:981.5px;width:1045px;height:47.25px;background:#f4f4f4"></div>
<div class="a" style="left:1770px;top:1076.0px;width:1045px;height:47.25px;background:#f4f4f4"></div>
<div class="a" style="left:1770px;top:1170.5px;width:1045px;height:47.25px;background:#f4f4f4"></div>
<div class="a" style="left:1834.0px;top:449px;width:1px;height:783px;background:#dcdcdc"></div>
<div class="a" style="left:2651.0px;top:449px;width:1px;height:783px;background:#dcdcdc"></div>
<div class="a" style="left:2800.0px;top:449px;width:1px;height:783px;background:#dcdcdc"></div>
<div class="t" style="top:463.14px;font-size:25px;letter-spacing:0.000px;line-height:29px;color:#000;left:1790.00px;">#</div>
<svg style="left:1811px;top:474px" width="18" height="10"><path d="M0 9 L8.2 0.5 L16.5 9 Z" fill="#c4c4c4"/></svg>
<div class="t" style="top:463.14px;font-size:25px;letter-spacing:1.704px;line-height:29px;color:#000;left:1840.00px;">country</div>
<div class="t" style="top:463.14px;font-size:25px;letter-spacing:1.384px;line-height:29px;color:#000;right:59.63px;text-align:right;">avg_temp</div>
<div class="t" style="top:519.36px;font-size:25px;letter-spacing:0.000px;line-height:29px;color:#444;right:1025.70px;text-align:right;">1</div>
<div class="t" style="top:519.36px;font-size:25px;letter-spacing:1.614px;line-height:29px;color:#000;left:1840.90px;">Zimbabwe</div>
<div class="t" style="top:519.36px;font-size:25px;letter-spacing:0.000px;line-height:29px;color:#000;right:60.20px;text-align:right;">3</div>
<div class="t" style="top:566.61px;font-size:25px;letter-spacing:0.000px;line-height:29px;color:#444;right:1025.70px;text-align:right;">2</div>
<div class="t" style="top:566.61px;font-size:25px;letter-spacing:1.634px;line-height:29px;color:#000;left:1840.90px;">Zambia</div>
<div class="t" style="top:566.61px;font-size:25px;letter-spacing:0.000px;line-height:29px;color:#000;right:60.20px;text-align:right;">3</div>
<div class="t" style="top:613.86px;font-size:25px;letter-spacing:0.000px;line-height:29px;color:#444;right:1025.70px;text-align:right;">3</div>
<div class="t" style="top:613.86px;font-size:25px;letter-spacing:0.768px;line-height:29px;color:#000;left:1840.90px;">Yemen</div>
<div class="t" style="top:613.86px;font-size:25px;letter-spacing:0.000px;line-height:29px;color:#000;right:60.20px;text-align:right;">4</div>
<div class="t" style="top:661.11px;font-size:25px;letter-spacing:0.000px;line-height:29px;color:#444;right:1025.70px;text-align:right;">4</div>
<div class="t" style="top:661.11px;font-size:25px;letter-spacing:1.562px;line-height:29px;color:#000;left:1840.90px;">Viet Nam</div>
<div class="t" style="top:661.11px;font-size:25px;letter-spacing:0.000px;line-height:29px;color:#000;right:60.20px;text-align:right;">6</div>
<div class="t" style="top:708.36px;font-size:25px;letter-spacing:0.000px;line-height:29px;color:#444;right:1025.70px;text-align:right;">5</div>
<div class="t" style="top:708.36px;font-size:25px;letter-spacing:1.129px;line-height:29px;color:#000;left:1840.90px;">Venezuela (Bolivarian Republic of)</div>
<div class="t" style="top:708.36px;font-size:25px;letter-spacing:0.000px;line-height:29px;color:#000;right:60.20px;text-align:right;">3</div>
<div class="t" style="top:755.61px;font-size:25px;letter-spacing:0.000px;line-height:29px;color:#444;right:1025.70px;text-align:right;">6</div>
<div class="t" style="top:755.61px;font-size:25px;letter-spacing:1.367px;line-height:29px;color:#000;left:1840.90px;">Vanuatu</div>
<div class="t" style="top:755.61px;font-size:25px;letter-spacing:0.000px;line-height:29px;color:#000;right:60.20px;text-align:right;">3</div>
<div class="t" style="top:802.86px;font-size:25px;letter-spacing:0.000px;line-height:29px;color:#444;right:1025.70px;text-align:right;">7</div>
<div class="t" style="top:802.86px;font-size:25px;letter-spacing:1.054px;line-height:29px;color:#000;left:1840.90px;">Uzbekistan</div>
<div class="t" style="top:802.86px;font-size:25px;letter-spacing:0.000px;line-height:29px;color:#000;right:60.20px;text-align:right;">3</div>
<div class="t" style="top:850.11px;font-size:25px;letter-spacing:0.000px;line-height:29px;color:#444;right:1025.70px;text-align:right;">8</div>
<div class="t" style="top:850.11px;font-size:25px;letter-spacing:1.328px;line-height:29px;color:#000;left:1840.90px;">Uruguay</div>
<div class="t" style="top:850.11px;font-size:25px;letter-spacing:0.000px;line-height:29px;color:#000;right:60.20px;text-align:right;">5</div>
<div class="t" style="top:897.36px;font-size:25px;letter-spacing:0.000px;line-height:29px;color:#444;right:1025.70px;text-align:right;">9</div>
<div class="t" style="top:897.36px;font-size:25px;letter-spacing:1.446px;line-height:29px;color:#000;left:1840.90px;">United States of America</div>
<div class="t" style="top:897.36px;font-size:25px;letter-spacing:0.000px;line-height:29px;color:#000;right:60.20px;text-align:right;">2</div>
<div class="t" style="top:944.61px;font-size:25px;letter-spacing:2.868px;line-height:29px;color:#444;right:1022.82px;text-align:right;">10</div>
<div class="t" style="top:944.61px;font-size:25px;letter-spacing:1.421px;line-height:29px;color:#000;left:1840.90px;">United Kingdom of Great Britain and Northern Ireland</div>
<div class="t" style="top:944.61px;font-size:25px;letter-spacing:0.000px;line-height:29px;color:#000;right:60.20px;text-align:right;">4</div>
<div class="t" style="top:991.86px;font-size:25px;letter-spacing:4.718px;line-height:29px;color:#444;right:1020.98px;text-align:right;">11</div>
<div class="t" style="top:991.86px;font-size:25px;letter-spacing:1.395px;line-height:29px;color:#000;left:1840.90px;">United Arab Emirates</div>
<div class="t" style="top:991.86px;font-size:25px;letter-spacing:0.000px;line-height:29px;color:#000;right:60.20px;text-align:right;">3</div>
<div class="t" style="top:1039.11px;font-size:25px;letter-spacing:2.868px;line-height:29px;color:#444;right:1022.82px;text-align:right;">12</div>
<div class="t" style="top:1039.11px;font-size:25px;letter-spacing:1.160px;line-height:29px;color:#000;left:1840.90px;">Ukraine</div>
<div class="t" style="top:1039.11px;font-size:25px;letter-spacing:0.000px;line-height:29px;color:#000;right:60.20px;text-align:right;">2</div>
<div class="t" style="top:1086.36px;font-size:25px;letter-spacing:2.868px;line-height:29px;color:#444;right:1022.82px;text-align:right;">13</div>
<div class="t" style="top:1086.36px;font-size:25px;letter-spacing:1.098px;line-height:29px;color:#000;left:1840.90px;">Uganda</div>
<div class="t" style="top:1086.36px;font-size:25px;letter-spacing:0.000px;line-height:29px;color:#000;right:60.20px;text-align:right;">5</div>
<div class="t" style="top:1133.61px;font-size:25px;letter-spacing:2.868px;line-height:29px;color:#444;right:1022.82px;text-align:right;">14</div>
<div class="t" style="top:1133.61px;font-size:25px;letter-spacing:0.668px;line-height:29px;color:#000;left:1840.90px;">Tuvalu</div>
<div class="t" style="top:1133.61px;font-size:25px;letter-spacing:0.000px;line-height:29px;color:#000;right:60.20px;text-align:right;">3</div>
<div class="t" style="top:1180.86px;font-size:25px;letter-spacing:2.868px;line-height:29px;color:#444;right:1022.82px;text-align:right;">15</div>
<div class="t" style="top:1180.86px;font-size:25px;letter-spacing:1.104px;line-height:29px;color:#000;left:1840.90px;">Turkmenistan</div>
<div class="t" style="top:1180.86px;font-size:25px;letter-spacing:0.000px;line-height:29px;color:#000;right:60.20px;text-align:right;">5</div>
<div class="a" style="left:1769px;top:1217.75px;width:1046px;height:14.25px;overflow:hidden"><div class="t" style="right:-744.90px;top:10.22px;font-size:25px;line-height:29px;letter-spacing:1.6px;color:#444">16</div><div class="t" style="left:71.90px;top:10.22px;font-size:25px;line-height:29px;letter-spacing:1.6px;color:#000">Turkey</div></div>
<div class="a" style="left:2190px;top:1247px;width:202.5px;height:54.5px;background:linear-gradient(#f9f9f9,#e3e3e3);border:1px solid #b4b4b4;border-radius:4px"></div>
<div class="t" style="top:1261.24px;font-size:25px;letter-spacing:0.438px;line-height:29px;color:#333;left:2259.00px;">Close</div></body></html>
